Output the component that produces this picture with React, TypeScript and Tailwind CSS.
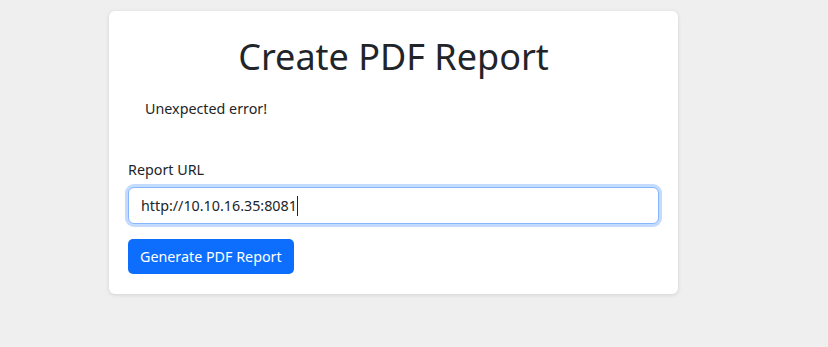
export default function App() {
  return (
    <div
      className="min-h-[347px] bg-[#efefef] pt-[11px] pl-[109px]"
      style={{ fontFamily: '"Noto Sans", "Open Sans", sans-serif' }}
    >
      <div className="w-[569px] h-[283px] rounded-[6px] bg-white shadow-[0_1px_4px_rgba(0,0,0,0.12)] px-[19px] pt-[22px]">
        <h1 className="text-center text-[36px] leading-[48px] font-normal text-[#212529]">
          Create PDF Report
        </h1>
        <p className="mt-[17px] pl-[17px] text-[14.3px] leading-[22px] text-[#212529]">
          Unexpected error!
        </p>
        <label className="block mt-[39px] text-[14.3px] leading-[22px] text-[#212529]">
          Report URL
        </label>
        <div className="mt-[6px] h-[37px] w-[531px] rounded-[6px] border border-[#86b7fe] bg-white shadow-[0_0_0_3px_rgba(13,110,253,0.25)] px-[12px] flex items-center text-[14.3px] text-[#212529]">
          <span>http://10.10.16.35:8081</span>
          <span className="w-px h-[20px] bg-[#212529]" />
        </div>
        <button className="mt-[15px] h-[35px] px-[12px] rounded-[5px] bg-[#0d6efd] text-white text-[14.3px]">
          Generate PDF Report
        </button>
      </div>
    </div>
  );
}
